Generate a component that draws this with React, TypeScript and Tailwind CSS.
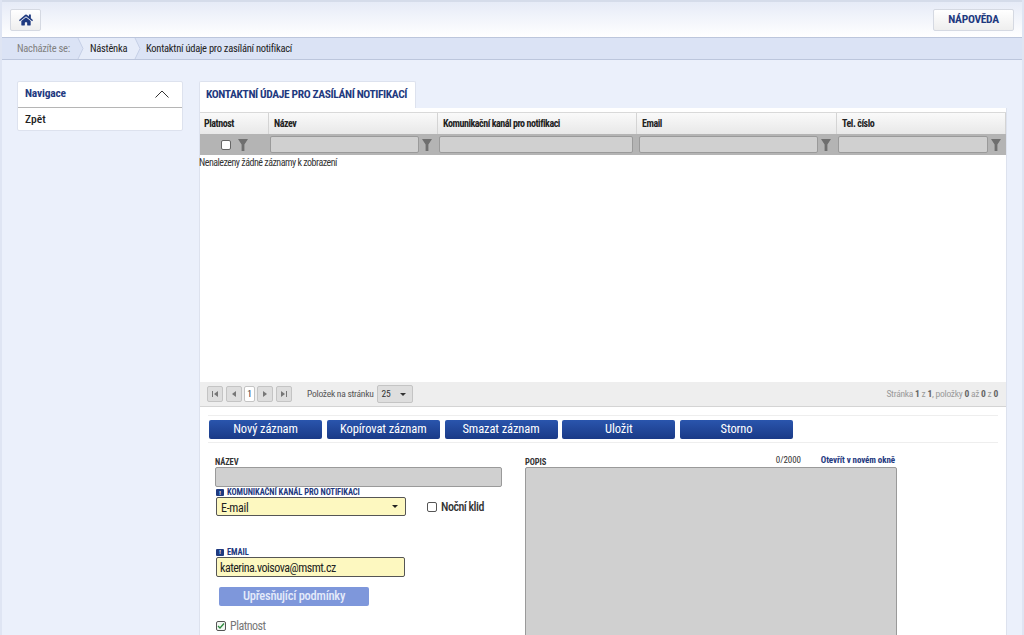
import { FaHome } from 'react-icons/fa'

const COLUMNS = [
  { label: 'Platnost', width: 'w-[69px]', pad: 'pl-[4px]' },
  { label: 'Název', width: 'w-[169px]', pad: 'pl-[5px]' },
  { label: 'Komunikační kanál pro notifikaci', width: 'w-[199px]', pad: 'pl-[5px]' },
  { label: 'Email', width: 'w-[200px]', pad: 'pl-[5px]' },
  { label: 'Tel. číslo', width: 'flex-1', pad: 'pl-[5px]' },
]

const ACTIONS = ['Nový záznam', 'Kopírovat záznam', 'Smazat záznam', 'Uložit', 'Storno']

const Funnel = () => (
  <svg width="10" height="12" viewBox="0 0 10 12" className="shrink-0">
    <path d="M0 0h10L6.4 5.5V12H3.6V5.5z" fill="#6f6f6f" />
  </svg>
)

const FilterInput = ({ width }: { width: string }) => (
  <div className={`h-[17px] ${width} rounded-[2px] border border-[#9a9a9a] bg-[#d0d0d0]`} />
)

const PagerButton = ({ glyph }: { glyph: 'first' | 'prev' | 'next' | 'last' }) => (
  <div className="flex h-[16px] w-[16px] items-center justify-center rounded-[2px] border border-[#c4c4c4] bg-[#dedede]">
    <svg width="8" height="8" viewBox="0 0 8 8">
      {glyph === 'first' && <path d="M1 1h1v6H1zM7 1v6L3 4z" fill="#777" />}
      {glyph === 'prev' && <path d="M6 1v6L2 4z" fill="#777" />}
      {glyph === 'next' && <path d="M2 1v6l4-3z" fill="#777" />}
      {glyph === 'last' && <path d="M6 1h1v6H6zM1 1v6l4-3z" fill="#777" />}
    </svg>
  </div>
)

const Required = () => (
  <span className="flex h-[7px] w-[8px] items-center justify-center rounded-[1px] bg-[#1f3a80] text-[6px] font-bold leading-none text-white">!</span>
)

// sipka mezi polozkami drobeckove navigace
const CrumbArrow = ({ from, to }: { from: string; to: string }) => (
  <svg width="7" height="21" viewBox="0 0 7 21" className="shrink-0">
    <rect width="7" height="21" fill={to} />
    <path d="M0 0h1l5 10.5L1 21H0z" fill={from} />
    <path d="M1 0l5 10.5L1 21" fill="none" stroke="#c5cfe6" />
  </svg>
)

const App = () => {
  return (
    <div className="flex h-[635px] w-[1024px] flex-col overflow-hidden border-x-2 border-[#dfe5f3] bg-[#ebf0fb] font-['Roboto','Liberation_Sans',sans-serif] text-[#222] [font-stretch:condensed]">
      {/* horni lista */}
      <div className="flex h-[37px] shrink-0 items-center justify-between border-t-2 border-[#d5dcea] bg-gradient-to-b from-[#e6ebf7] to-white px-[8px]">
        <button className="flex h-[22px] w-[31px] items-center justify-center rounded-[2px] border border-[#d5d9e2] bg-gradient-to-b from-white to-[#eeeeee]">
          <FaHome className="h-[14px] w-[14px] text-[#1f3a80]" />
        </button>
        <button className="h-[22px] w-[81px] rounded-[2px] border border-[#d5d9e2] bg-gradient-to-b from-white to-[#eeeeee] text-[11.5px] font-bold tracking-[-0.3px] text-[#1f3a80]">
          NÁPOVĚDA
        </button>
      </div>

      {/* drobeckova navigace */}
      <div className="flex h-[23px] shrink-0 items-center border-y border-[#bcc6dc] bg-[#dbe3f5] pl-[15px] text-[10.5px] tracking-[-0.25px]">
        <span className="w-[60px] text-[#808080] whitespace-nowrap">Nacházíte se:</span>
        <CrumbArrow from="#dbe3f5" to="#e6ecf9" />
        <span className="flex h-full w-[50px] items-center bg-[#e6ecf9] pl-[6px] text-[#222]">Nástěnka</span>
        <CrumbArrow from="#e6ecf9" to="#dbe3f5" />
        <span className="ml-[5px] text-[#222]">Kontaktní údaje pro zasílání notifikací</span>
      </div>

      <div className="flex flex-1 gap-[16px] pl-[15px] pt-[21px]">
        {/* navigace */}
        <div className="h-[50px] w-[166px] shrink-0 rounded-[2px] border border-[#dde2ee] bg-white">
          <div className="flex h-[26px] items-center justify-between border-b border-[#b5b5b5] pb-[2px] pl-[7px] pr-[13px] text-[11.5px] font-bold tracking-[-0.2px] text-[#1f3a80]">
            Navigace
            <svg width="14" height="8" viewBox="0 0 14 8"><path d="M0.5 7.5L7 1l6.5 6.5" fill="none" stroke="#333" /></svg>
          </div>
          <div className="flex h-[22px] items-center pl-[7px] pt-[1px] text-[11.5px] font-medium">Zpět</div>
        </div>

        <div className="flex w-[808px] flex-col">
          <div className="flex h-[27px] w-[217px] items-center rounded-t-[2px] border border-b-0 border-[#dde2ee] bg-white pl-[6px] text-[11.5px] font-bold tracking-[-0.38px] text-[#1f3a80] whitespace-nowrap">
            KONTAKTNÍ ÚDAJE PRO ZASÍLÁNÍ NOTIFIKACÍ
          </div>
          <div className="flex-1 border-x border-[#dde2ee] bg-white pt-[4px]">
            {/* hlavicka tabulky */}
            <div className="flex h-[22px] border-t border-[#d9d9d9] bg-gradient-to-b from-[#fafafa] to-[#e8e8e8] text-[10px] font-bold tracking-[-0.45px]">
              {COLUMNS.map(col => (
                <div key={col.label} className={`${col.width} ${col.pad} flex items-center border-r border-[#d4d4d4]`}>
                  {col.label}
                </div>
              ))}
            </div>
            {/* filtry */}
            <div className="flex h-[21px] items-center bg-[#b4b4b4]">
              <div className="flex w-[69px] items-center justify-center gap-[7px]">
                <div className="h-[10px] w-[10px] rounded-[2px] border border-[#666] bg-white" />
                <Funnel />
              </div>
              <div className="flex w-[169px] items-center gap-[3px] pl-[1px]">
                <FilterInput width="w-[149px]" />
                <Funnel />
              </div>
              <div className="w-[199px] pl-[1px]"><FilterInput width="w-[194px]" /></div>
              <div className="flex w-[200px] items-center gap-[3px] pl-[2px]">
                <FilterInput width="w-[179px]" />
                <Funnel />
              </div>
              <div className="flex flex-1 items-center gap-[3px] pl-[1px]">
                <FilterInput width="w-[150px]" />
                <Funnel />
              </div>
            </div>
            <div className="-ml-px h-[227px] pt-[2px] text-[10px] leading-[12px] tracking-[-0.5px] text-[#333]">Nenalezeny žádné záznamy k zobrazení</div>

            {/* strankovani */}
            <div className="flex h-[25px] items-center justify-between border-b border-[#d4d4d4] bg-[#eeeeee] pl-[7px] pr-[8px] text-[9.5px] tracking-[-0.25px]">
              <div className="flex items-center">
                <PagerButton glyph="first" />
                <div className="ml-[3px]"><PagerButton glyph="prev" /></div>
                <div className="ml-[2px] flex h-[16px] w-[11px] items-center justify-center rounded-[2px] border border-[#c4c4c4] bg-white text-[#333]">1</div>
                <div className="ml-[2px]"><PagerButton glyph="next" /></div>
                <div className="ml-[3px]"><PagerButton glyph="last" /></div>
                <span className="ml-[15px] text-[#555]">Položek na stránku</span>
                <div className="ml-[3px] flex h-[18px] w-[36px] items-center justify-between rounded-[2px] border border-[#c4c4c4] bg-[#dedede] pl-[4px] pr-[6px] text-[#333]">
                  25
                  <span className="h-0 w-0 border-x-[3px] border-t-[3px] border-x-transparent border-t-[#333]" />
                </div>
              </div>
              <div className="text-[#9a9a9a]">
                Stránka <b className="text-[#666]">1</b> z <b className="text-[#666]">1</b>, položky <b className="text-[#666]">0</b> až <b className="text-[#666]">0</b> z <b className="text-[#666]">0</b>
              </div>
            </div>

            {/* akce */}
            <div className="mx-[8px] mt-[8px] flex h-[28px] items-center gap-[4.75px] border-y border-[#eeeeee] pl-[1px]">
              {ACTIONS.map(action => (
                <button key={action} className="h-[19px] w-[113px] rounded-[2px] bg-gradient-to-b from-[#2a55ad] to-[#1a3a87] text-[12.5px] tracking-[-0.1px] text-white">
                  {action}
                </button>
              ))}
            </div>

            {/* formular */}
            <div className="flex pl-[15px] pt-[12px]">
              <div className="w-[310px]">
                <div className="h-[12px] pt-[1px] text-[8.5px] font-bold leading-[12px] tracking-[-0.1px] text-[#333]">NÁZEV</div>
                <div className="h-[20px] w-[287px] rounded-[2px] border border-[#9a9a9a] bg-[#d0d0d0]" />
                <div className="ml-px flex h-[10px] items-center gap-[3px] pt-[1px] text-[8.5px] font-bold tracking-[-0.08px] text-[#1f3a80]">
                  <Required />
                  KOMUNIKAČNÍ KANÁL PRO NOTIFIKACI
                </div>
                <div className="ml-px flex items-center">
                  <div className="flex h-[19px] w-[190px] items-center justify-between rounded-[2px] border border-[#555] bg-[#fdf8c0] pl-[4px] pr-[7px] pt-[2px] text-[12px] tracking-[-0.3px]">
                    E-mail
                    <span className="mb-[2px] h-0 w-0 border-x-[3px] border-t-[3px] border-x-transparent border-t-[#222]" />
                  </div>
                  <div className="ml-[21px] flex items-center gap-[4px] text-[12px] font-medium tracking-[-0.5px] text-[#333]">
                    <div className="h-[10px] w-[10px] rounded-[2px] border border-[#555] bg-white" />
                    Noční klid
                  </div>
                </div>
                <div className="ml-px mt-[31px] flex h-[10px] items-center gap-[3px] text-[8.5px] font-bold tracking-[-0.1px] text-[#1f3a80]">
                  <Required />
                  EMAIL
                </div>
                <div className="ml-px flex h-[20px] w-[189px] items-center rounded-[2px] border border-[#555] bg-[#fdf8c0] pl-[3px] pt-[1px] text-[12px] tracking-[-0.5px]">
                  katerina.voisova@msmt.cz
                </div>
                <button className="ml-[4px] mt-[10px] h-[19px] w-[150px] rounded-[2px] bg-[#7e97db] text-[12.5px] font-medium tracking-[-0.25px] text-[#e5ebfa]">
                  Upřesňující podmínky
                </button>
                <div className="ml-px mt-[10px] flex items-center gap-[4px] text-[12px] tracking-[-0.5px] text-[#777]">
                  <div className="flex h-[10px] w-[10px] items-center justify-center rounded-[2px] border border-[#555] bg-[#f2f7f2]">
                    <svg width="8" height="8" viewBox="0 0 8 8"><path d="M1 4l2 2 4-4.5" fill="none" stroke="#2d8a3e" strokeWidth="1.3" /></svg>
                  </div>
                  Platnost
                </div>
              </div>
              <div className="w-[372px]">
                <div className="flex h-[12px] items-center justify-between text-[9px] font-bold leading-[12px] tracking-[-0.1px]">
                  <span className="pt-[1px] text-[8.5px] text-[#333]">POPIS</span>
                  <div className="-mt-[2px] flex">
                    <span className="mr-[20px] font-normal text-[#333]">0/2000</span>
                    <span className="pr-[2px] text-[#1f3a80]">Otevřít v novém okně</span>
                  </div>
                </div>
                <div className="h-[170px] rounded-[2px] border border-[#9a9a9a] bg-[#d0d0d0]" />
              </div>
            </div>
          </div>
        </div>
      </div>
    </div>
  )
}

export default App
